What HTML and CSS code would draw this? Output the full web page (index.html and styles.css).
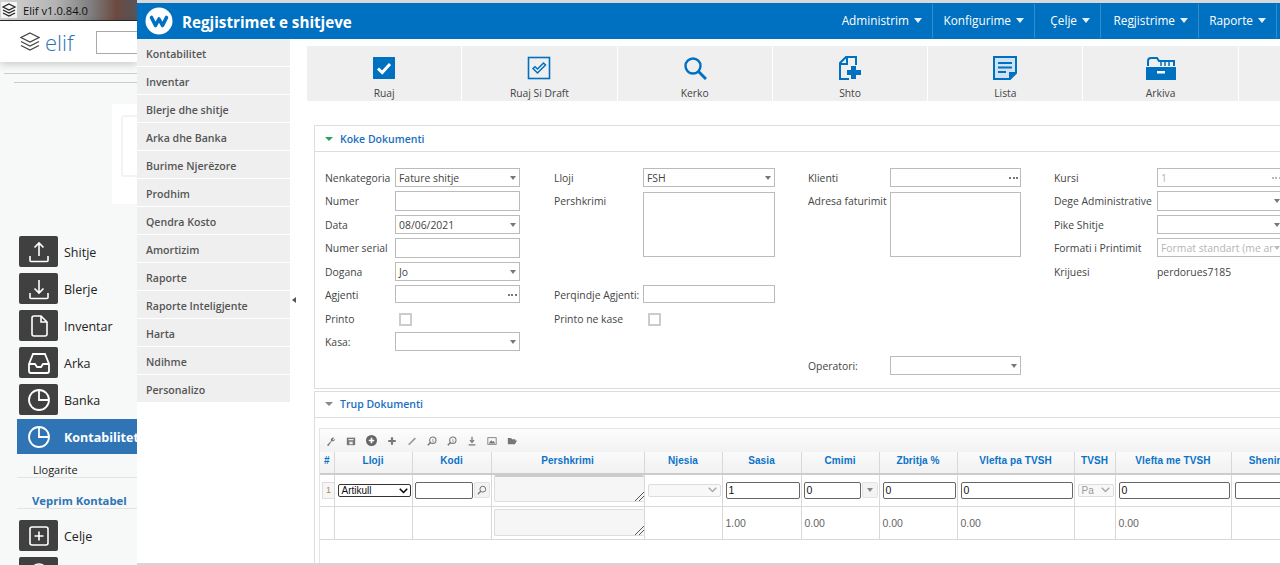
FILE: index.html
```html
<!DOCTYPE html>
<html lang="sq">
<head>
    <meta charset="UTF-8">
    <meta name="viewport" content="width=device-width, initial-scale=1.0">
    <title>Regjistrimet e shitjeve</title>
    <link rel="stylesheet" href="styles.css">
</head>
<body>
    <svg class="svg-defs" width="0" height="0">
        <symbol id="i-pie" viewBox="0 0 24 24"><circle cx="12" cy="12" r="10" fill="none" stroke="#fff" stroke-width="1.8"/><path d="M12 2v10h10" fill="none" stroke="#fff" stroke-width="1.8"/></symbol>
        <symbol id="i-arrow" viewBox="0 0 8 5"><path d="M0 0h8L4 5z" fill="currentColor"/></symbol>
        <symbol id="i-zoom" viewBox="0 0 12 12"><circle cx="7" cy="5" r="3.800" fill="none" stroke="#777" stroke-width="1.300"/><path d="M4.500 7.500L1 11" stroke="#777" stroke-width="1.800"/><path d="M7 3.500v3h1.500" fill="none" stroke="#999"/></symbol>
    </svg>

    <!-- Dritarja e prapme -->
    <div class="back-window">
        <div class="title-bar">
            <svg class="title-icon" viewBox="0 0 16 16"><rect width="16" height="16" fill="#f4f4f4"/><path d="M8 2l6 3-6 3-6-3zM2 8l6 3 6-3M2 11l6 3 6-3" fill="none" stroke="#222" stroke-width="1.2"/></svg>
            <span>Elif v1.0.84.0</span>
        </div>
        <div class="logo-bar">
            <svg class="logo-icon" viewBox="0 0 20 20"><path d="M10 1.500l9 4.500-9 4.500-9-4.500zM1 10l9 4.500 9-4.500M1 14l9 4.500 9-4.500" fill="none" stroke="#444" stroke-width="1.200"/></svg>
            <span class="logo-text">elif</span>
            <div class="logo-search"></div>
        </div>
        <div class="back-body">
            <div class="back-rule"></div>
            <div class="watermark"><div class="watermark-box"></div></div>
            <div class="side-item">
                <div class="side-icon"><svg viewBox="0 0 24 24"><path d="M12 16V3M7.500 7.500L12 3l4.500 4.500M3 16v4.500q0 1 1 1h16q1 0 1-1V16" fill="none" stroke="#fff" stroke-width="1.600"/></svg></div>
                <span>Shitje</span>
            </div>
            <div class="side-item">
                <div class="side-icon"><svg viewBox="0 0 24 24"><path d="M12 3v13M7.500 11.500L12 16l4.500-4.500M3 16v4.500q0 1 1 1h16q1 0 1-1V16" fill="none" stroke="#fff" stroke-width="1.600"/></svg></div>
                <span>Blerje</span>
            </div>
            <div class="side-item">
                <div class="side-icon"><svg viewBox="0 0 24 24"><path d="M5 4q0-2 2-2h7l6 6v12q0 2-2 2H7q-2 0-2-2zM14 2v6h6" fill="none" stroke="#fff" stroke-width="1.600"/></svg></div>
                <span>Inventar</span>
            </div>
            <div class="side-item">
                <div class="side-icon"><svg viewBox="0 0 24 24"><path d="M2 13L6 3h12l4 10v7q0 2-2 2H4q-2 0-2-2zM2 13h6l2 3h4l2-3h6" fill="none" stroke="#fff" stroke-width="1.800"/></svg></div>
                <span>Arka</span>
            </div>
            <div class="side-item">
                <div class="side-icon"><svg viewBox="0 0 24 24"><use href="#i-pie"/></svg></div>
                <span>Banka</span>
            </div>
            <div class="side-item active">
                <div class="side-icon"><svg viewBox="0 0 24 24"><use href="#i-pie"/></svg></div>
                <span>Kontabilitet</span>
            </div>
            <div class="side-link">Llogarite</div>
            <div class="side-group">Veprim Kontabel</div>
            <div class="side-item">
                <div class="side-icon"><svg viewBox="0 0 24 24"><rect x="3" y="3" width="18" height="18" rx="2" fill="none" stroke="#fff" stroke-width="1.600"/><path d="M12 7.500v9M7.500 12h9" stroke="#fff" stroke-width="1.600"/></svg></div>
                <span>Celje</span>
            </div>
            <div class="side-item">
                <div class="side-icon"><svg viewBox="0 0 24 24"><circle cx="12" cy="11" r="8" fill="none" stroke="#fff" stroke-width="1.600"/></svg></div>
            </div>
        </div>
    </div>

    <!-- Dritarja kryesore -->
    <div class="main-window">
        <header class="top-bar">
            <svg class="brand" viewBox="0 0 28 28"><circle cx="14" cy="14" r="13.500" fill="#fff"/><path d="M6.500 10.500L10.500 18.500L14 12L17.500 18.500L21.500 10.500" fill="none" stroke="#0070c0" stroke-width="3.600" stroke-linecap="round" stroke-linejoin="round"/></svg>
            <h1>Regjistrimet e shitjeve</h1>
            <nav class="top-nav">
                <a class="nav-admin">Administrim<svg class="caret"><use href="#i-arrow"/></svg></a>
                <a class="nav-konf">Konfigurime<svg class="caret"><use href="#i-arrow"/></svg></a>
                <a class="nav-celje">Çelje<svg class="caret"><use href="#i-arrow"/></svg></a>
                <a class="nav-regj">Regjistrime<svg class="caret"><use href="#i-arrow"/></svg></a>
                <a class="nav-rap">Raporte<svg class="caret"><use href="#i-arrow"/></svg></a>
            </nav>
        </header>

        <div class="work-area">
            <ul class="module-menu">
                <li>Kontabilitet</li>
                <li>Inventar</li>
                <li>Blerje dhe shitje</li>
                <li>Arka dhe Banka</li>
                <li>Burime Njerëzore</li>
                <li>Prodhim</li>
                <li>Qendra Kosto</li>
                <li>Amortizim</li>
                <li>Raporte</li>
                <li>Raporte Inteligjente</li>
                <li>Harta</li>
                <li>Ndihme</li>
                <li>Personalizo</li>
            </ul>
            <div class="collapse-strip"><span class="collapse-arrow"></span></div>

            <div class="content">
                <div class="action-bar">
                    <div class="action">
                        <svg viewBox="0 0 24 24"><rect x="1" y="1" width="22" height="22" fill="#0070c0"/><path d="M6 12.500l4.200 4L18 8" fill="none" stroke="#fff" stroke-width="3"/></svg>
                        <span>Ruaj</span>
                    </div>
                    <div class="action">
                        <svg viewBox="0 0 24 24"><rect x="1.500" y="1.500" width="21" height="21" fill="none" stroke="#0070c0" stroke-width="1.600"/><path d="M6 12.500l2-1.800 2.500 2.300 6-6 2 2-8 8z" fill="none" stroke="#0070c0" stroke-width="1.500"/></svg>
                        <span>Ruaj Si Draft</span>
                    </div>
                    <div class="action">
                        <svg viewBox="0 0 24 24"><circle cx="10" cy="10" r="7.500" fill="none" stroke="#0070c0" stroke-width="2.400"/><path d="M15.500 15.500L23 23" stroke="#0070c0" stroke-width="3"/></svg>
                        <span>Kerko</span>
                    </div>
                    <div class="action">
                        <svg viewBox="0 0 24 24"><path d="M11 23H2V7l6-6h10v8" fill="none" stroke="#0070c0" stroke-width="2"/><path d="M2 8h7V1" fill="none" stroke="#0070c0" stroke-width="2"/><path d="M13 10h5v4h5v5h-5v4h-5v-4H9v-5h4z" fill="#0070c0"/></svg>
                        <span>Shto</span>
                    </div>
                    <div class="action">
                        <svg viewBox="0 0 24 24"><path d="M1 1h22v16l-6 6H1z" fill="#cfe2f3" stroke="#0070c0" stroke-width="2"/><path d="M5 7h14M5 11.500h14M5 16h8" stroke="#0070c0" stroke-width="2"/><path d="M16 23v-7h7z" fill="#0070c0"/></svg>
                        <span>Lista</span>
                    </div>
                    <div class="action">
                        <svg class="action-wide" viewBox="0 0 30 24"><path d="M0 11h30v13H0z" fill="#0070c0"/><path d="M2 10V5q0-3 3-3h6l2 3h15v5" fill="none" stroke="#0070c0" stroke-width="2"/><path d="M15 5v5M19 5v5M23 5v5" stroke="#0070c0" stroke-width="1.500"/><rect x="11" y="15" width="8" height="2.500" fill="#fff"/></svg>
                        <span>Arkiva</span>
                    </div>
                    <div class="action"></div>
                </div>

                <section class="panel panel-head">
                    <h2 class="panel-title"><span class="tri tri-green"></span>Koke Dokumenti</h2>
                    <div class="form-cols">
                        <div class="form-col col-a">
                            <label>Nenkategoria</label><div class="field select">Fature shitje</div>
                            <label>Numer</label><div class="field tall"></div>
                            <label>Data</label><div class="field select">08/06/2021</div>
                            <label>Numer serial</label><div class="field tall"></div>
                            <label>Dogana</label><div class="field select">Jo</div>
                            <label>Agjenti</label><div class="field dots short"></div>
                            <label>Printo</label><div class="check-cell"><span class="check"></span></div>
                            <label>Kasa:</label><div class="field select"></div>
                        </div>
                        <div class="form-col col-b">
                            <label>Lloji</label><div class="field select">FSH</div>
                            <label>Pershkrimi</label><div class="area"></div>
                            <div class="spacer"></div>
                            <label>Perqindje Agjenti:</label><div class="field short"></div>
                            <label>Printo ne kase</label><div class="check-cell"><span class="check"></span></div>
                        </div>
                        <div class="form-col col-c">
                            <label>Klienti</label><div class="field dots"></div>
                            <label>Adresa faturimit</label><div class="area"></div>
                            <div class="spacer spacer-big"></div>
                            <label>Operatori:</label><div class="field select"></div>
                        </div>
                        <div class="form-col col-d">
                            <label>Kursi</label><div class="field dots off">1</div>
                            <label>Dege Administrative</label><div class="field select tall"></div>
                            <label>Pike Shitje</label><div class="field select"></div>
                            <label>Formati i Printimit</label><div class="field select off">Format standart (me ar</div>
                            <label>Krijuesi</label><div class="plain">perdorues7185</div>
                        </div>
                    </div>
                </section>

                <section class="panel panel-body">
                    <h2 class="panel-title"><span class="tri"></span>Trup Dokumenti</h2>
                    <div class="grid-box">
                        <div class="grid-tools">
                            <svg viewBox="0 0 12 12"><path d="M1 11l5-5a3 3 0 0 1 4-4L8 4l1 1 2-2a3 3 0 0 1-4 3l-4 6z" fill="#777"/></svg>
                            <svg viewBox="0 0 12 12"><path d="M1 2h10v9H1z" fill="#777"/><path d="M3 3.500h6v1.500H3zM4 7h4v3H4z" fill="#eee"/></svg>
                            <svg class="tool-big" viewBox="0 0 12 12"><circle cx="6" cy="6" r="6" fill="#666"/><path d="M6 3v6M3 6h6" stroke="#fff" stroke-width="1.800"/></svg>
                            <svg viewBox="0 0 12 12"><path d="M6 1.500v9M1.500 6h9" stroke="#777" stroke-width="2.600"/></svg>
                            <svg viewBox="0 0 12 12"><path d="M2 10.500L10 2.500" stroke="#999" stroke-width="2"/></svg>
                            <svg viewBox="0 0 12 12"><use href="#i-zoom"/></svg>
                            <svg viewBox="0 0 12 12"><use href="#i-zoom"/></svg>
                            <svg viewBox="0 0 12 12"><path d="M6 1v6M3.500 5L6 7.500 8.500 5M2 10.500h8" fill="none" stroke="#777" stroke-width="1.500"/></svg>
                            <svg viewBox="0 0 12 12"><rect x="1" y="2" width="10" height="8" fill="none" stroke="#777"/><path d="M2 9l3-4 2 2 1-1 2 3z" fill="#777"/></svg>
                            <svg viewBox="0 0 12 12"><path d="M1 10V2.500h4l1 1.500h4v1.500H3.500L1 10h8.500L12 5.500H3.500" fill="#777"/></svg>
                        </div>
                        <table class="doc-table">
                            <colgroup>
                                <col class="w-14"><col class="w-78"><col class="w-79"><col class="w-153"><col class="w-78"><col class="w-79"><col class="w-78"><col class="w-78"><col class="w-117"><col class="w-41"><col class="w-116"><col class="w-78">
                            </colgroup>
                            <thead>
                                <tr><th>#</th><th>Lloji</th><th>Kodi</th><th>Pershkrimi</th><th>Njesia</th><th>Sasia</th><th>Cmimi</th><th>Zbritja %</th><th>Vlefta pa TVSH</th><th>TVSH</th><th>Vlefta me TVSH</th><th>Shenime</th></tr>
                            </thead>
                            <tbody>
                                <tr class="row-edit">
                                    <td class="row-num"><span>1</span></td>
                                    <td><div class="ctl ctl-select">Artikull<svg viewBox="0 0 12 8"><path d="M1 1l5 5 5-5" fill="none" stroke="#000" stroke-width="2"/></svg></div></td>
                                    <td><div class="with-btn"><div class="ctl"></div><span class="mini-btn"><svg viewBox="0 0 12 12"><circle cx="7" cy="5" r="3.500" fill="none" stroke="#777" stroke-width="1.200"/><path d="M4.500 7.500L1 11" stroke="#777" stroke-width="1.600"/></svg></span></div></td>
                                    <td class="cell-area"><div class="note note-top"></div></td>
                                    <td><div class="ctl-off">&nbsp;<svg viewBox="0 0 12 8"><path d="M1 1l5 5 5-5" fill="none" stroke="#aaa" stroke-width="2"/></svg></div></td>
                                    <td><div class="ctl">1</div></td>
                                    <td><div class="with-btn"><div class="ctl">0</div><span class="mini-btn"><i class="mini-tri"></i></span></div></td>
                                    <td><div class="ctl">0</div></td>
                                    <td><div class="ctl">0</div></td>
                                    <td><div class="ctl-off">Pa<svg viewBox="0 0 12 8"><path d="M1 1l5 5 5-5" fill="none" stroke="#aaa" stroke-width="2"/></svg></div></td>
                                    <td><div class="ctl">0</div></td>
                                    <td><div class="ctl"></div></td>
                                </tr>
                                <tr class="row-total">
                                    <td></td><td></td><td></td>
                                    <td class="cell-area"><div class="note"></div></td>
                                    <td></td><td>1.00</td><td>0.00</td><td>0.00</td><td>0.00</td><td></td><td>0.00</td><td></td>
                                </tr>
                            </tbody>
                        </table>
                    </div>
                </section>
            </div>
        </div>
    </div>
</body>
</html>
```

FILE: styles.css
```css
* {
    box-sizing: border-box;
}
html, body {
    margin: 0;
    height: 565px;
    overflow: hidden;
}
body {
    display: flex;
    width: 1280px;
    background-color: #fff;
    font-family: "Open Sans", "Noto Sans", sans-serif;
    font-size: 11px;
    color: #444;
}
.svg-defs {
    position: absolute;
}

/* Dritarja e prapme */
.back-window {
    flex: 0 0 137px;
    overflow: hidden;
    background-color: #f7f8f8;
}
.title-bar {
    height: 21px;
    display: flex;
    align-items: center;
    gap: 6px;
    padding-left: 1px;
    border-bottom: 1px solid #2a2a2a;
    background: linear-gradient(90deg, #d4d4d4 0, #b4b4b4 40%, #7c7a7a 68%, #6d4a40 85%, #55555a 100%);
    color: #111;
    font-size: 11.200px;
}
.title-icon {
    width: 16px;
    height: 16px;
}
.logo-bar {
    position: relative;
    height: 41px;
    display: flex;
    align-items: center;
    padding-left: 20px;
    background-color: #fff;
    box-shadow: 0 2px 8px rgba(0, 0, 0, 0.2);
}
.logo-icon {
    width: 20px;
    height: 21px;
}
.logo-text {
    margin-left: 5px;
    font-size: 22px;
    color: #2f75b5;
    font-weight: 300;
}
.logo-search {
    position: absolute;
    left: 96px;
    top: 10px;
    width: 60px;
    height: 23px;
    border: 1px solid #aaa;
}
.back-body {
    height: 503px;
    margin-left: 4px;
    padding-top: 8px;
    border-top: 1px solid #ccc;
    margin-top: 11px;
}
.back-rule {
    height: 1px;
    margin-left: 10px;
    background-color: #ccc;
}
.watermark {
    width: 25px;
    height: 100px;
    margin: 21px 0 32px 108px;
    padding: 11px 0 10px 9px;
    background-color: #fff;
}
.watermark-box {
    width: 40px;
    height: 62px;
    border: 2px solid #f3f3f3;
    border-radius: 3px;
}
.side-item {
    height: 31px;
    margin: 0 0 6px 15px;
    display: flex;
    align-items: center;
    gap: 6px;
    font-size: 12.500px;
    color: #222;
}
.side-item span {
    padding-top: 2px;
}
.side-icon {
    flex: none;
    width: 39px;
    height: 31px;
    display: flex;
    align-items: center;
    justify-content: center;
    background-color: #404040;
    border-radius: 2px;
}
.side-icon svg {
    width: 24px;
    height: 24px;
}
.side-item.active {
    height: 35px;
    margin: -2px 0 0 13px;
    padding-left: 2px;
    background-color: #2f75b5;
    color: #fff;
    font-weight: 700;
    white-space: nowrap;
}
.side-item.active .side-icon {
    background: none;
}
.side-link {
    height: 24px;
    margin-left: 13px;
    padding: 8px 0 0 16px;
    border-bottom: 1px solid #e3e3e3;
    color: #222;
    line-height: 15px;
}
.side-group {
    height: 31px;
    margin: 0 0 11px 13px;
    padding: 15px 0 0 15px;
    border-bottom: 1px solid #e3e3e3;
    color: #2f75b5;
    font-size: 11.300px;
    font-weight: 700;
    line-height: 15px;
    white-space: nowrap;
}

/* Dritarja kryesore */
.main-window {
    flex: 1;
    min-width: 0;
    height: 565px;
    overflow: hidden;
    padding-top: 3px;
    background: linear-gradient(#d8d8d8 3px, #fff 3px);
    border-bottom: 2px solid #d6d6d6;
}
.top-bar {
    height: 36px;
    display: flex;
    align-items: center;
    background-color: #0070c0;
    color: #fff;
}
.brand {
    width: 28px;
    height: 28px;
    margin-left: 8px;
}
.top-bar h1 {
    margin: 1px 0 0 9px;
    font-size: 15.200px;
    font-weight: 700;
    white-space: nowrap;
}
.top-nav {
    margin-left: auto;
    display: flex;
    height: 100%;
    padding-right: 3px;
}
.top-nav a {
    display: flex;
    align-items: center;
    justify-content: flex-end;
    gap: 5px;
    padding: 0 10px 2px 0;
    border-right: 1px solid #338dcd;
    margin: 1px 0;
    font-size: 11.800px;
    white-space: nowrap;
}
.nav-admin { width: 96px; }
.nav-konf { width: 102px; }
.nav-celje { width: 66px; }
.nav-regj { width: 98px; }
.nav-rap { width: 78px; }
.caret {
    width: 8px;
    height: 5px;
    color: #e6f0f8;
}
.work-area {
    display: flex;
    height: 524px;
}
.module-menu {
    flex: 0 0 153px;
    margin: 0;
    padding: 0;
    list-style: none;
}
.module-menu li {
    height: 27px;
    margin-bottom: 1px;
    padding-left: 9px;
    background-color: #efefef;
    color: #555;
    font-size: 10.600px;
    font-weight: 600;
    line-height: 31px;
    white-space: nowrap;
}
.collapse-strip {
    flex: 0 0 17px;
    padding: 258px 0 0 2px;
}
.collapse-arrow {
    display: block;
    width: 0;
    height: 0;
    border: 3px solid transparent;
    border-right: 4px solid #555;
    border-left: 0;
}
.content {
    flex: 1;
    min-width: 0;
    padding-top: 7px;
}

/* Shiriti i veprimeve */
.action-bar {
    display: grid;
    grid-template-columns: repeat(7, 154.300px);
    column-gap: 1px;
    height: 55px;
}
.action {
    display: flex;
    flex-direction: column;
    align-items: center;
    padding-top: 10px;
    background-color: #efefef;
    font-size: 10.300px;
    color: #444;
}
.action svg {
    width: 24px;
    height: 24px;
    flex: none;
}
.action svg.action-wide {
    width: 30px;
}
.action span {
    margin-top: 6px;
    line-height: 15px;
}

/* Panelet */
.panel {
    margin-left: 7px;
    margin-right: -20px;
    border: 1px solid #ddd;
}
.panel-head {
    height: 264px;
    margin-top: 24px;
}
.panel-body {
    height: 200px;
    margin-top: 2px;
}
.panel-title {
    display: flex;
    align-items: center;
    height: 26px;
    margin: 0;
    padding-left: 10px;
    border-bottom: 1px solid #ddd;
    color: #1a6fc0;
    font-size: 10.500px;
    font-weight: 600;
}
.panel-body .panel-title {
    padding-bottom: 2px;
}
.tri {
    width: 0;
    height: 0;
    margin-right: 7px;
    border: 4px solid transparent;
    border-top: 4px solid #888;
    border-bottom: 0;
}
.tri-green {
    border-top-color: #2aa05a;
}

/* Formulari */
.form-cols {
    display: flex;
    padding: 16px 0 0 10px;
}
.form-col {
    flex: none;
    display: grid;
    grid-auto-rows: 23.450px;
    align-items: start;
}
.col-a {
    width: 229px;
    grid-template-columns: 70px 125px;
}
.col-b {
    width: 254px;
    grid-template-columns: 89px 132px;
}
.col-c {
    width: 246px;
    grid-template-columns: 82px 131px;
}
.col-d {
    grid-template-columns: 103px 127px;
}
.form-col label {
    padding-top: 1px;
    line-height: 19px;
    font-size: 10.400px;
    white-space: nowrap;
}
.field {
    position: relative;
    height: 19px;
    padding-left: 3px;
    border: 1px solid #bbb;
    background-color: #fff;
    color: #444;
    font-size: 10.400px;
    line-height: 18px;
    white-space: nowrap;
    overflow: hidden;
}
.field.tall {
    height: 20px;
}
.field.short {
    height: 18px;
}
.field.select::after {
    content: "";
    position: absolute;
    right: 3px;
    top: 7px;
    border: 3px solid transparent;
    border-top: 4px solid #777;
    border-bottom: 0;
}
.field.dots::after {
    content: "";
    position: absolute;
    right: 2px;
    top: 8px;
    width: 9px;
    height: 2px;
    background: repeating-linear-gradient(90deg, #777 0 2px, transparent 2px 3.500px);
}
.field.off {
    color: #b5b5b5;
}
.field.off::after {
    opacity: 0.5;
}
.area {
    grid-row: span 3;
    height: 65px;
    margin-top: 1px;
    border: 1px solid #bbb;
    background-color: #fff;
}
.spacer {
    grid-column: span 2;
}
.spacer-big {
    grid-row: span 4;
}
.check-cell {
    padding: 4px 0 0 4px;
}
.check {
    display: block;
    width: 13px;
    height: 13px;
    border: 2px solid #ccc;
    background-color: #fff;
}
.col-b .check-cell {
    padding-left: 5px;
}
.plain {
    padding-top: 1px;
    line-height: 19px;
    font-size: 10.400px;
}

/* Tabela */
.grid-box {
    margin: 10px 0 0 4px;
    border: 1px solid #e4e4e4;
    border-bottom: 0;
    height: 140px;
}
.grid-tools {
    height: 23px;
    display: flex;
    align-items: center;
    gap: 10px;
    padding-left: 6px;
    background: linear-gradient(#fdfdfd, #f2f2f2);
}
.grid-tools svg {
    width: 10px;
    height: 10px;
}
.grid-tools svg.tool-big {
    width: 11px;
    height: 11px;
}
.doc-table {
    width: 989px;
    table-layout: fixed;
    border-collapse: collapse;
    font-family: "Liberation Sans", Arial, sans-serif;
    font-size: 10.500px;
}
.w-14 { width: 14px; }
.w-41 { width: 41px; }
.w-78 { width: 78px; }
.w-79 { width: 79px; }
.w-116 { width: 116px; }
.w-117 { width: 117px; }
.w-153 { width: 153px; }
.doc-table th {
    height: 22px;
    padding: 0 0 4px;
    border-right: 1px solid #d8d8d8;
    border-bottom: 2px solid #ccc;
    background: linear-gradient(#fafafa, #f1f1f1);
    color: #0a72c8;
    font-size: 10px;
    letter-spacing: 0.1px;
    white-space: nowrap;
    overflow: hidden;
}
.doc-table td {
    padding: 0 1px 0 3px;
    border-right: 1px solid #d8d8d8;
    border-bottom: 1px solid #d8d8d8;
    color: #666;
}
.row-edit td {
    height: 32px;
}
.row-total td {
    height: 33px;
}
.row-num {
    font-size: 9px;
}
.doc-table td.row-num {
    padding: 0 0 0 2px;
    color: #a85;
}
.row-num span {
    display: block;
    height: 17px;
    padding-left: 3px;
    line-height: 15px;
    border: 1px solid #ddd;
    border-right: 0;
    background-color: #f6f6f6;
}
.ctl {
    flex: 1;
    min-width: 0;
    height: 17px;
    padding-left: 2px;
    border: 1px solid #666;
    border-radius: 2px;
    background-color: #fff;
    color: #111;
    font-size: 10.500px;
    line-height: 15px;
}
.ctl-select {
    display: flex;
    align-items: center;
    justify-content: space-between;
    height: 13px;
    margin-top: 1px;
    padding: 0 2px 0 3px;
    border-color: #333;
    font-size: 10px;
}
.ctl-select svg, .ctl-off svg {
    width: 9px;
    height: 6px;
}
.ctl-off {
    display: flex;
    align-items: center;
    justify-content: space-between;
    height: 13px;
    padding: 0 3px;
    border: 1px solid #ddd;
    border-radius: 2px;
    background-color: #f8f8f8;
    color: #999;
    font-size: 10px;
}
.with-btn {
    display: flex;
    gap: 1px;
    margin-left: -1px;
}
.mini-btn {
    flex: none;
    width: 16px;
    height: 16px;
    display: flex;
    align-items: center;
    justify-content: center;
    border: 1px solid #e2e2e2;
    border-radius: 2px;
    background-color: #f3f3f3;
}
.mini-btn svg {
    width: 10px;
    height: 10px;
}
.mini-tri {
    border: 3px solid transparent;
    border-top: 4px solid #888;
    border-bottom: 0;
}
.doc-table td.cell-area {
    padding: 1px 0 0 2px;
    vertical-align: top;
}
.note {
    height: 27px;
    margin-top: 1px;
    border: 1px solid #ddd;
    border-right: 0;
    border-radius: 2px;
    background:
        linear-gradient(135deg, transparent 0 calc(100% - 7px), #555 calc(100% - 7px) calc(100% - 6px), transparent calc(100% - 6px) calc(100% - 4px), #555 calc(100% - 4px) calc(100% - 3px), transparent calc(100% - 3px)),
        #f6f6f6;
}
.note-top {
    margin-top: -1px;
    border-top: 2px solid #ccc;
}
```
